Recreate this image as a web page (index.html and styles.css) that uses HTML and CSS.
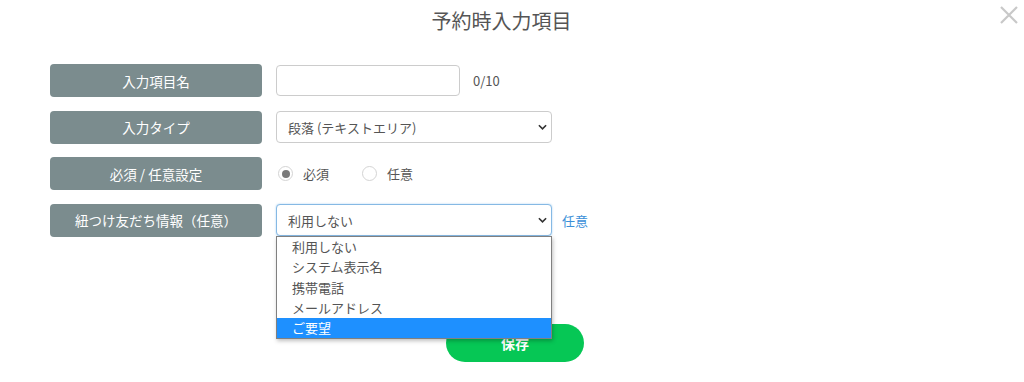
FILE: index.html
```html
<!DOCTYPE html>
<html lang="ja">
  <head>
    <meta charset="UTF-8" />
    <meta name="viewport" content="width=device-width, initial-scale=1.0" />
    <title>予約時入力項目</title>
    <link rel="stylesheet" href="styles.css">
  </head>
  <body>
    <section class="modal">
      <header class="modal_head">
        <h1>予約時入力項目</h1>
        <button class="close" aria-label="閉じる">
          <svg width="20" height="20" viewBox="0 0 20 20">
            <path d="M2 2 L18 18 M18 2 L2 18" stroke="#c8c8c8" stroke-width="2.2" fill="none" />
          </svg>
        </button>
      </header>

      <form class="felter">
        <div class="raekke">
          <label class="etiket">入力項目名</label>
          <div class="felt">
            <input type="text" class="tekst" />
            <span class="taeller">0/10</span>
          </div>
        </div>

        <div class="raekke">
          <label class="etiket">入力タイプ</label>
          <div class="felt">
            <div class="vaelg">段落 (テキストエリア)</div>
          </div>
        </div>

        <div class="raekke">
          <label class="etiket">必須 / 任意設定</label>
          <div class="felt radioer">
            <span class="radio valgt"></span><span class="radio_tekst">必須</span>
            <span class="radio"></span><span class="radio_tekst">任意</span>
          </div>
        </div>

        <div class="raekke">
          <label class="etiket">紐つけ友だち情報（任意）</label>
          <div class="felt">
            <div class="dropdown">
              <div class="vaelg fokus">利用しない</div>
              <ul class="liste">
                <li>利用しない</li>
                <li>システム表示名</li>
                <li>携帯電話</li>
                <li>メールアドレス</li>
                <li class="aktiv">ご要望</li>
              </ul>
            </div>
            <span class="link">任意</span>
          </div>
        </div>

        <div class="knapper">
          <button type="button" class="gem">保存</button>
        </div>
      </form>
    </section>
  </body>
</html>
```

FILE: styles.css
```css
* {
  box-sizing: border-box;
  --label: #7b8c8e;
  --text: #555;
  --line: #ccc;
  --green: #06c755;
  --blue: #1e90ff;
}

body {
  margin: 0;
  background: #fff;
  font-family: "Noto Sans CJK JP", "Noto Sans", sans-serif;
  color: var(--text);
}

.modal {
  width: 1024px;
  height: 382px;
  position: relative;
  overflow: hidden;
}

.modal_head {
  height: 40px;
  display: flex;
  justify-content: center;
  align-items: center;
  padding-right: 21px;
}

.modal_head h1 {
  margin: 0;
  font-size: 20px;
  font-weight: 400;
  color: #555;
}

.close {
  position: absolute;
  top: 5px;
  right: 5px;
  border: none;
  background: none;
  padding: 0;
  width: 20px;
  height: 20px;
}

.felter {
  padding: 24px 50px 0;
  display: flex;
  flex-direction: column;
  gap: 13.6px;
}

.raekke {
  display: flex;
  align-items: center;
  gap: 14px;
  height: 33px;
}

.etiket {
  width: 212px;
  height: 33px;
  background: var(--label);
  color: #fff;
  border-radius: 4px;
  font-size: 13.5px;
  display: flex;
  align-items: center;
  justify-content: center;
}

.felt {
  display: flex;
  align-items: center;
  gap: 13px;
  font-size: 13px;
}

.tekst {
  width: 184px;
  height: 31px;
  border: 1px solid var(--line);
  border-radius: 4px;
}

.taeller {
  color: #555;
}

.vaelg {
  width: 276px;
  height: 32px;
  border: 1px solid var(--line);
  border-radius: 4px;
  padding-left: 11px;
  display: flex;
  align-items: center;
  color: #555;
  background: #fff url("data:image/svg+xml,%3Csvg xmlns='http://www.w3.org/2000/svg' width='10' height='6' viewBox='0 0 10 6'%3E%3Cpath d='M1 1 L5 5 L9 1' stroke='%23333' stroke-width='1.8' fill='none'/%3E%3C/svg%3E") no-repeat right 4px center;
  background-size: 9px 6px;
}

.fokus {
  border-color: #86b9e4;
  box-shadow: 0 0 2px rgba(102, 175, 233, 0.6);
}

.radioer {
  gap: 0;
  padding-left: 2px;
}

.radio {
  width: 15px;
  height: 15px;
  border: 1px solid #d4d4d4;
  border-radius: 50%;
  display: flex;
  align-items: center;
  justify-content: center;
}

.radio.valgt::after {
  content: "";
  width: 8px;
  height: 8px;
  border-radius: 50%;
  background: #7a7a7a;
}

.radio_tekst {
  margin-left: 10px;
  margin-right: 33px;
}

.dropdown {
  position: relative;
}

.liste {
  position: absolute;
  top: 32px;
  left: 0;
  width: 276px;
  margin: 0;
  padding: 0;
  list-style: none;
  background: #fff;
  border: 1px solid #808080;
  box-shadow: 1px 2px 4px rgba(0, 0, 0, 0.25);
  z-index: 2;
}

.liste li {
  height: 20.2px;
  line-height: 20px;
  padding-left: 15px;
  font-size: 13px;
  color: #555;
}

.liste .aktiv {
  background: var(--blue);
  color: #fff;
}

.link {
  color: #3b8fd8;
  margin-left: -3px;
}

.knapper {
  display: flex;
  justify-content: center;
  padding-left: 6px;
  margin-top: 74px;
}

.gem {
  width: 138px;
  height: 38px;
  border: none;
  border-radius: 19px;
  background: var(--green);
  color: #fff;
  font-family: "Noto Sans CJK JP", sans-serif;
  font-size: 14px;
  font-weight: 700;
}
```
